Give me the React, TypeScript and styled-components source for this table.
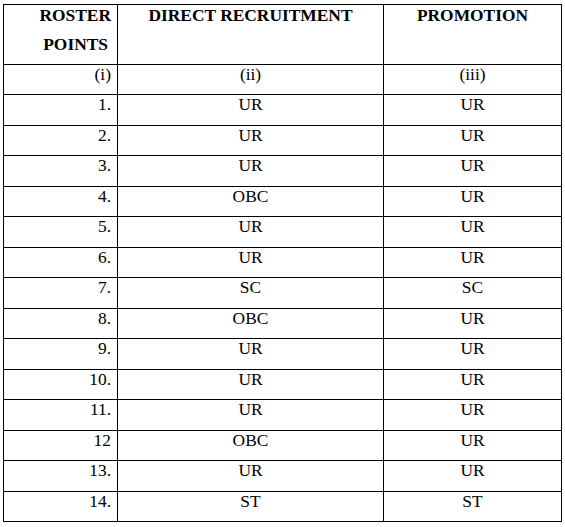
import React from 'react';
import styled, { createGlobalStyle, css } from 'styled-components';

const GlobalStyle = createGlobalStyle`
  body {
    margin: 0;
    background: #ffffff;
    font-family: "Liberation Serif", "Times New Roman", serif;
    color: #000000;
  }
`;

const Page = styled.div`
  padding: 4px 0 0 3px;
`;

const RosterGrid = styled.div`
  display: grid;
  grid-template-columns: 114px 266px 178px;
  grid-template-rows: 60px repeat(15, 30.47px);
  width: 559px;
  box-sizing: border-box;
  border-left: 1px solid #000;
  border-top: 1px solid #000;
`;

interface CellProps {
  align: 'left' | 'center' | 'right';
  bold?: boolean;
}

const Cell = styled.div<CellProps>`
  box-sizing: border-box;
  border-right: 1px solid #000;
  border-bottom: 1px solid #000;
  font-size: 17.4px;
  line-height: 18px;
  padding-top: 0;
  white-space: nowrap;
  text-align: ${({ align }) => align};

  ${({ align }) => align === 'right' && css`
    padding-right: 6px;
  `}

  ${({ bold }) => bold && css`
    font-weight: bold;
    padding-top: 1px;
  `}
`;

const SecondLine = styled.div`
  margin-top: 11px;
  padding-right: 3px;
`;

const rows: [string, string, string][] = [
  ['(i)', '(ii)', '(iii)'],
  ['1.', 'UR', 'UR'],
  ['2.', 'UR', 'UR'],
  ['3.', 'UR', 'UR'],
  ['4.', 'OBC', 'UR'],
  ['5.', 'UR', 'UR'],
  ['6.', 'UR', 'UR'],
  ['7.', 'SC', 'SC'],
  ['8.', 'OBC', 'UR'],
  ['9.', 'UR', 'UR'],
  ['10.', 'UR', 'UR'],
  ['11.', 'UR', 'UR'],
  ['12', 'OBC', 'UR'],
  ['13.', 'UR', 'UR'],
  ['14.', 'ST', 'ST'],
];

const App = () => {
  return (
    <>
      <GlobalStyle />
      <Page>
        <RosterGrid>
          <Cell align='right' bold>
            <div>ROSTER</div>
            <SecondLine>POINTS</SecondLine>
          </Cell>
          <Cell align='center' bold>DIRECT RECRUITMENT</Cell>
          <Cell align='center' bold>PROMOTION</Cell>
          {rows.map((row, idx) => (
            <React.Fragment key={idx}>
              <Cell align='right'>{row[0]}</Cell>
              <Cell align='center'>{row[1]}</Cell>
              <Cell align='center'>{row[2]}</Cell>
            </React.Fragment>
          ))}
        </RosterGrid>
      </Page>
    </>
  );
};

export default App;
